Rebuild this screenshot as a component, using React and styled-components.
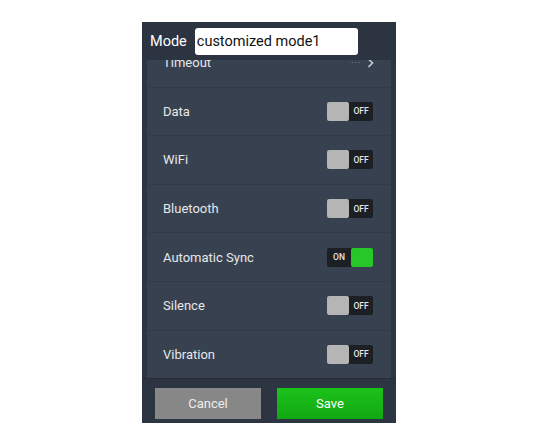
import React, { useState } from 'react'
import styled, { createGlobalStyle } from 'styled-components'

const GlobalStyle = createGlobalStyle`
    html, body {
        margin: 0;
        padding: 0;
        background: #ffffff;
        font-family: Roboto, "Liberation Sans", sans-serif;
    }
`

const Page = styled.div`
    width: 550px;
    height: 428px;
    display: flex;
    justify-content: center;
    padding-top: 22px;
    padding-right: 12px;
    box-sizing: border-box;
`

const Phone = styled.div`
    width: 254px;
    height: 401px;
    background: #2d3542;
    display: flex;
    flex-direction: column;
`

const Header = styled.div`
    height: 38px;
    flex-shrink: 0;
    display: flex;
    align-items: center;
    padding: 0 8px;
    gap: 8px;
    background: #2c3441;
    position: relative;
    z-index: 1;
`

const HeaderLabel = styled.span`
    color: #ffffff;
    font-size: 14.5px;
`

const ModeInput = styled.input`
    width: 163px;
    height: 27px;
    box-sizing: border-box;
    border: none;
    border-radius: 3px;
    background: #ffffff;
    padding: 0 2px;
    font-family: Roboto, "Liberation Sans", sans-serif;
    font-size: 14.5px;
    color: #111;
    outline: none;
    caret-color: #222;
`

const ListViewport = styled.div`
    height: 318px;
    flex-shrink: 0;
    overflow: hidden;
    padding: 0 5px;
`

// list is scrolled a little, so the first row sits half under the header
const List = styled.div`
    margin-top: -21px;
    display: flex;
    flex-direction: column;
    background: #384150;
`

const Row = styled.div`
    height: 47.6px;
    display: flex;
    align-items: center;
    justify-content: space-between;
    padding: 0 17px 0 16px;
    border-bottom: 1px solid #333b48;
    color: #e6e8ea;
    font-size: 13px;
`

const Trailing = styled.div`
    display: flex;
    align-items: center;
    gap: 6px;
    color: #9aa0a8;
    font-size: 9px;
    letter-spacing: 1px;
`

const Switch = styled.button`
    width: 46px;
    height: 19px;
    padding: 0;
    border: none;
    border-radius: 2px;
    background: #1c1f24;
    display: flex;
    flex-direction: ${p => (p.$on ? 'row' : 'row-reverse')};
    align-items: stretch;
    cursor: pointer;
    margin-right: 1px;
`

const SwitchText = styled.span`
    flex: 1;
    display: flex;
    align-items: center;
    justify-content: center;
    color: #e6e6e6;
    font-family: Roboto, "Liberation Sans", sans-serif;
    font-size: 8.5px;
    font-weight: 500;
`

const Knob = styled.span`
    width: 22px;
    border-radius: 2px;
    background: ${p => (p.$on ? '#27c72a' : '#b5b5b5')};
`

const Footer = styled.div`
    flex: 1;
    display: flex;
    align-items: flex-start;
    gap: 16px;
    padding: 9px 13px 0 13px;
    border-top: 1px solid #262d38;
`

const FooterButton = styled.button`
    flex: 1;
    height: 31px;
    border: none;
    border-radius: 0;
    font-family: Roboto, "Liberation Sans", sans-serif;
    font-size: 13px;
    color: ${p => (p.$primary ? '#ffffff' : '#eeeeee')};
    background: ${p => (p.$primary ? 'linear-gradient(#1cc21c, #10a810)' : '#878787')};
    cursor: pointer;
`

const settings = [
    { id: 'data', label: 'Data', on: false },
    { id: 'wifi', label: 'WiFi', on: false },
    { id: 'bt', label: 'Bluetooth', on: false },
    { id: 'sync', label: 'Automatic Sync', on: true },
    { id: 'silence', label: 'Silence', on: false },
    { id: 'vibration', label: 'Vibration', on: false },
]

function Toggle({ on, onClick }) {
    return (
        <Switch $on={on} onClick={onClick}>
            <SwitchText>{on ? 'ON' : 'OFF'}</SwitchText>
            <Knob $on={on} />
        </Switch>
    )
}

function App() {
    const [modeName, setModeName] = useState('customized mode1')
    const [states, setStates] = useState(() =>
        Object.fromEntries(settings.map(s => [s.id, s.on]))
    )

    const flip = (id) => {
        setStates(prev => ({ ...prev, [id]: !prev[id] }))
    }

    return (
        <>
            <GlobalStyle />
            <Page>
                <Phone>
                    <Header>
                        <HeaderLabel>Mode</HeaderLabel>
                        <ModeInput value={modeName} onChange={e => setModeName(e.target.value)} />
                    </Header>
                    <ListViewport>
                        <List>
                            <Row>
                                Timeout
                                <Trailing>
                                    ···
                                    <svg width="7" height="10" viewBox="0 0 7 10">
                                        <path d="M1.5 1 L5.5 5 L1.5 9" stroke="#c8ccd2" strokeWidth="1.6" fill="none" />
                                    </svg>
                                </Trailing>
                            </Row>
                            {settings.map(s => (
                                <Row key={s.id}>
                                    {s.label}
                                    <Toggle on={states[s.id]} onClick={() => flip(s.id)} />
                                </Row>
                            ))}
                        </List>
                    </ListViewport>
                    <Footer>
                        <FooterButton>Cancel</FooterButton>
                        <FooterButton $primary>Save</FooterButton>
                    </Footer>
                </Phone>
            </Page>
        </>
    )
}

export default App
